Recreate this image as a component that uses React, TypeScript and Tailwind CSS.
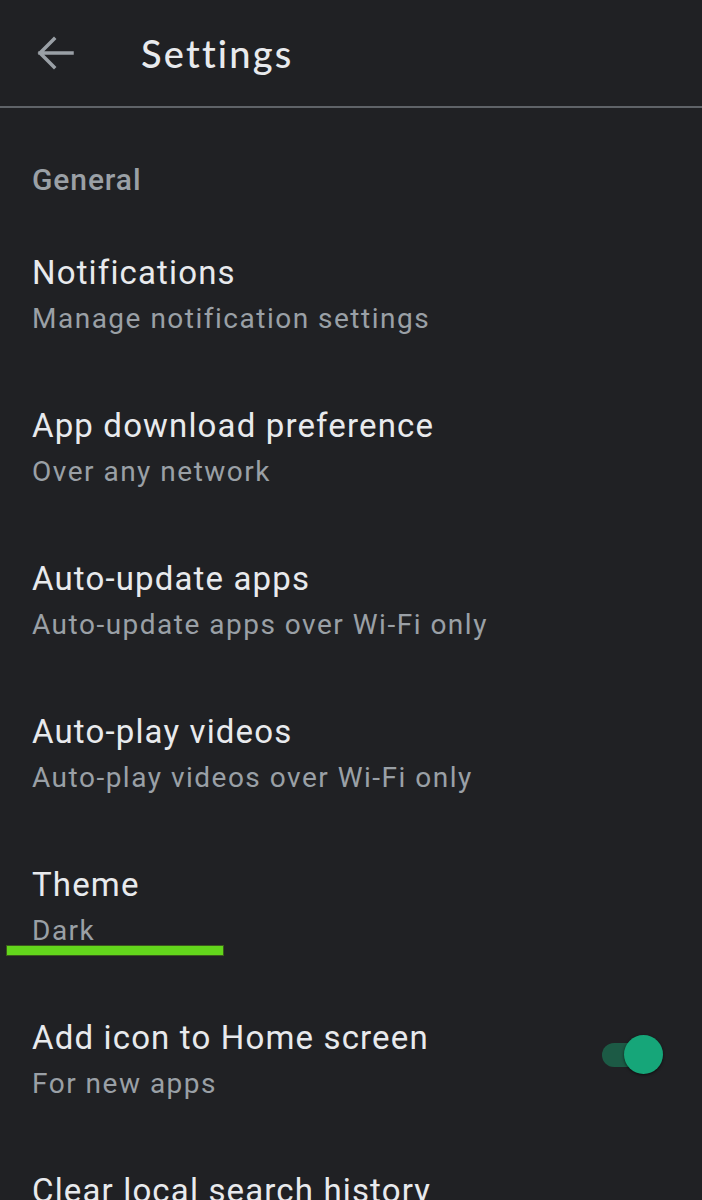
import React from "react";

const items = [
  { title: "Notifications", sub: "Manage notification settings" },
  { title: "App download preference", sub: "Over any network" },
  { title: "Auto-update apps", sub: "Auto-update apps over Wi-Fi only" },
  { title: "Auto-play videos", sub: "Auto-play videos over Wi-Fi only" },
  { title: "Theme", sub: "Dark", mark: true },
  { title: "Add icon to Home screen", sub: "For new apps", toggle: true },
  { title: "Clear local search history", sub: "" },
];

export default function App() {
  return (
    <div
      className="w-[702px] h-[1200px] overflow-hidden bg-[#202124] text-[#e8eaed]"
      style={{ fontFamily: "Roboto, 'Noto Sans', sans-serif" }}
    >
      <header className="h-[108px] flex items-center border-b-2 border-[#5f6368]">
        <div className="w-[141px] pl-[36px] flex items-center">
          <svg width="38" height="34" viewBox="0 0 38 34" fill="none">
            <path d="M36 17H4M18 3L4 17l14 14" stroke="#9aa0a6" strokeWidth="3.5" strokeLinecap="square" strokeLinejoin="miter" />
          </svg>
        </div>
        <h1
          className="text-[38px] leading-none font-medium tracking-[2.2px] text-[#e8eaed]"
          style={{ fontFamily: "Lato, 'Open Sans', sans-serif" }}
        >
          Settings
        </h1>
      </header>
      <div className="pl-[32px] pt-[52px] pb-[17px] text-[30px] leading-[40px] font-medium tracking-[0.9px] text-[#9aa0a6]">
        General
      </div>
      {items.map((it) => (
        <div key={it.title} className="relative h-[153px] pl-[32px] pr-[39px] pt-[36px] flex items-start">
          <div className="flex-1">
            <div className="text-[33px] leading-[40px] tracking-[1.15px] text-[#e8eaed]">{it.title}</div>
            <div className="text-[28px] leading-[52px] tracking-[1.5px] text-[#9aa0a6]">{it.sub}</div>
          </div>
          {it.toggle && (
            <div className="relative w-[61px] h-[40px] mt-[17px]">
              <div className="absolute left-0 top-[8px] w-[50px] h-[24px] rounded-full bg-[#1c5a45]" />
              <div className="absolute right-0 top-0 w-[39px] h-[39px] rounded-full bg-[#16a679] shadow-[0_1px_3px_rgba(0,0,0,0.6)]" />
            </div>
          )}
          {it.mark && (
            <div className="absolute left-[6px] top-[116px] w-[218px] h-[11px] bg-[#63d61c] border border-[#3a5a1c]" />
          )}
        </div>
      ))}
    </div>
  );
}
